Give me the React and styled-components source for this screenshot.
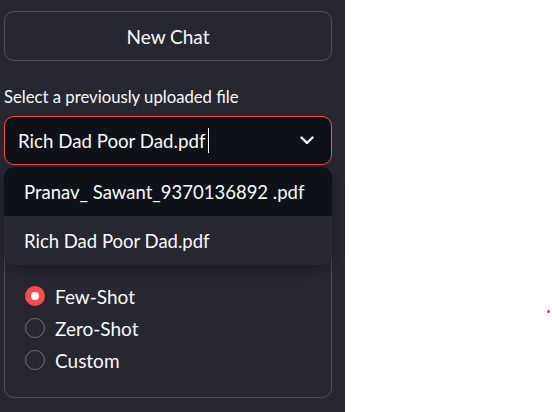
import React, { useState } from 'react';
import styled, { createGlobalStyle } from 'styled-components';

const GlobalStyle = createGlobalStyle`
  html, body {
    margin: 0;
    padding: 0;
    background: #fff;
  }
  body {
    font-family: Lato, "Noto Sans", sans-serif;
    -webkit-font-smoothing: antialiased;
  }
`;

const Page = styled.div`
  display: flex;
  width: 552px;
  height: 412px;
  overflow: hidden;
`;

const Sidebar = styled.aside`
  width: 345px;
  flex-shrink: 0;
  box-sizing: border-box;
  background: #262730;
  padding: 11px 13px 0 4px;
  display: flex;
  flex-direction: column;
  color: #fafafa;
`;

const Main = styled.main`
  flex: 1;
  background: #fff;
  position: relative;
`;

const StatusDot = styled.span`
  position: absolute;
  left: 202px;
  top: 310px;
  width: 3px;
  height: 3px;
  border-radius: 50%;
  background: #ff2b2b;
`;

const Button = styled.button`
  height: 50px;
  width: 100%;
  border: 1px solid rgba(250, 250, 250, 0.2);
  border-radius: 10px;
  background: transparent;
  color: #fafafa;
  font-family: inherit;
  font-size: 19px;
  cursor: pointer;
`;

const Label = styled.div`
  margin-top: 24px;
  height: 31px;
  font-size: 16.7px;
  line-height: 25px;
  color: #fafafa;
`;

const SelectWrap = styled.div`
  position: relative;
`;

const SelectBox = styled.div`
  height: 49px;
  box-sizing: border-box;
  border: 1px solid #ff4b4b;
  border-radius: 10px;
  background: #0e1117;
  display: flex;
  align-items: center;
  padding: 0 17px 0 13px;
  font-size: 18.7px;
`;

const Value = styled.span`
  flex: 1;
  display: flex;
  align-items: center;
`;

const Caret = styled.span`
  display: inline-block;
  width: 1px;
  height: 25px;
  margin-left: 3px;
  background: #fafafa;
`;

const Menu = styled.ul`
  position: absolute;
  z-index: 5;
  top: calc(100% + 2px);
  left: 0;
  right: 0;
  margin: 0;
  padding: 0;
  list-style: none;
  background: #262730;
  border-radius: 10px;
  overflow: hidden;
  box-shadow: 0 4px 16px rgba(0, 0, 0, 0.35);
`;

const Option = styled.li`
  height: 49px;
  display: flex;
  align-items: center;
  padding-left: 20px;
  font-size: 18.5px;
  background: ${(props) => (props.active ? '#0e1117' : '#262730')};
`;

/* the group's heading sits under the open menu, so only its frame shows */
const Group = styled.div`
  margin-top: 20px;
  border: 1px solid rgba(250, 250, 250, 0.2);
  border-radius: 10px;
  padding: 94px 20px 21px 20px;
`;

const RadioRow = styled.label`
  height: 32px;
  display: flex;
  align-items: center;
  gap: 10px;
  font-size: 19px;
  cursor: pointer;
`;

const RadioDot = styled.span`
  width: 20px;
  height: 20px;
  box-sizing: border-box;
  border-radius: 50%;
  border: ${(props) => (props.checked ? 'none' : '1.5px solid rgba(250, 250, 250, 0.35)')};
  background: ${(props) => (props.checked ? '#ff4b4b' : 'transparent')};
  display: flex;
  align-items: center;
  justify-content: center;
  &::after {
    content: '';
    width: 8px;
    height: 8px;
    border-radius: 50%;
    background: #fafafa;
    display: ${(props) => (props.checked ? 'block' : 'none')};
  }
`;

const files = ['Pranav_ Sawant_9370136892 .pdf', 'Rich Dad Poor Dad.pdf'];
const modes = ['Few-Shot', 'Zero-Shot', 'Custom'];

const Chevron = () => (
  <svg width="14" height="9" viewBox="0 0 14 9" fill="none">
    <path d="M1.5 1.5L7 7L12.5 1.5" stroke="#fafafa" strokeWidth="2.4" strokeLinecap="round" strokeLinejoin="round" />
  </svg>
);

const App = () => {
  const [mode, setMode] = useState('Few-Shot');

  return (
    <>
      <GlobalStyle />
      <Page>
        <Sidebar>
          <Button>New Chat</Button>
          <Label>Select a previously uploaded file</Label>
          <SelectWrap>
            <SelectBox>
              <Value>Rich Dad Poor Dad.pdf<Caret /></Value>
              <Chevron />
            </SelectBox>
            <Menu>
              {files.map((f, k) => (
                <Option key={`file_${k}`} active={k === 0}>{f}</Option>
              ))}
            </Menu>
          </SelectWrap>
          <Group>
            {modes.map((m) => (
              <RadioRow key={m} onClick={() => setMode(m)}>
                <RadioDot checked={mode === m} />
                {m}
              </RadioRow>
            ))}
          </Group>
        </Sidebar>
        <Main>
          <StatusDot />
        </Main>
      </Page>
    </>
  );
};

export default App;
